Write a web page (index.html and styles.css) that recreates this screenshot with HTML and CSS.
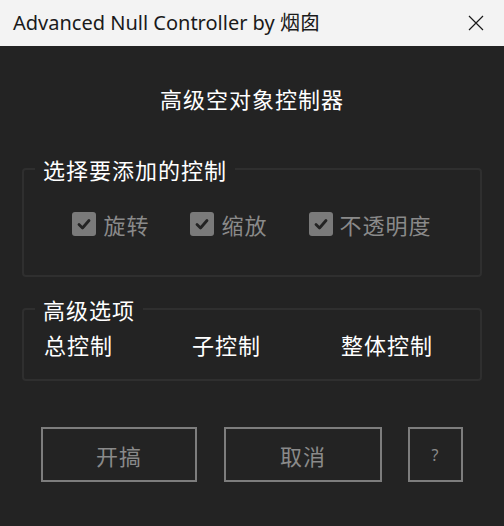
FILE: index.html
```html
<!DOCTYPE html>
<html lang="zh">
<head>
<meta charset="utf-8">
<link rel="stylesheet" href="styles.css">
</head>
<body>
<div class="window">
  <div class="titlebar">
    <span class="title">Advanced Null Controller by 烟囱</span>
    <svg class="close" width="16" height="16" viewBox="0 0 16 16"><path d="M1 1 L15 15 M15 1 L1 15" stroke="#1a1a1a" stroke-width="1.2" fill="none"/></svg>
  </div>
  <div class="content">
    <div class="heading">高级空对象控制器</div>
    <fieldset class="group group1">
      <legend>选择要添加的控制</legend>
      <div class="checks">
        <label class="check"><span class="box"><svg width="16" height="16" viewBox="0 0 16 16"><path d="M3 8.5 L6.5 12 L13 4.5" stroke="#232323" stroke-width="2.8" fill="none" stroke-linecap="round" stroke-linejoin="round"/></svg></span>旋转</label>
        <label class="check"><span class="box"><svg width="16" height="16" viewBox="0 0 16 16"><path d="M3 8.5 L6.5 12 L13 4.5" stroke="#232323" stroke-width="2.8" fill="none" stroke-linecap="round" stroke-linejoin="round"/></svg></span>缩放</label>
        <label class="check"><span class="box"><svg width="16" height="16" viewBox="0 0 16 16"><path d="M3 8.5 L6.5 12 L13 4.5" stroke="#232323" stroke-width="2.8" fill="none" stroke-linecap="round" stroke-linejoin="round"/></svg></span>不透明度</label>
      </div>
    </fieldset>
    <fieldset class="group group2">
      <legend>高级选项</legend>
      <div class="options">
        <span class="opt">总控制</span>
        <span class="opt">子控制</span>
        <span class="opt">整体控制</span>
      </div>
    </fieldset>
    <div class="buttons">
      <button class="btn btn-wide">开搞</button>
      <button class="btn btn-wide2">取消</button>
      <button class="btn btn-help">?</button>
    </div>
  </div>
</div>
</body>
</html>
```
FILE: styles.css
```css
html, body {
  margin: 0;
  padding: 0;
  background: #232323;
}
.window {
  width: 504px;
  height: 526px;
  background: #232323;
  font-family: "Noto Sans CJK SC", "Noto Sans", sans-serif;
}
.titlebar {
  height: 46px;
  background: #f3f3f3;
  display: flex;
  align-items: center;
  justify-content: space-between;
  padding: 0 20px 0 13px;
  box-sizing: border-box;
}
.title {
  font-family: "Noto Sans", "Noto Sans CJK SC", sans-serif;
  font-size: 20px;
  color: #1a1a1a;
  line-height: 26px;
  margin-top: -1px;
}
.close {
  width: 16px;
  height: 16px;
}
.content {
  padding: 0 22px;
}
.heading {
  margin-top: 39px;
  text-align: center;
  color: #ffffff;
  font-size: 22px;
  letter-spacing: 1px;
  line-height: 26px;
  height: 26px;
}
.group {
  margin: 0;
  border: 2px solid #2f2f2f;
  border-radius: 4px;
  padding: 0;
  min-width: 0;
}
.group legend {
  margin-left: 11px;
  padding: 0 8px;
  color: #ffffff;
  font-size: 22px;
  letter-spacing: 1px;
  line-height: 26px;
}
.group1 {
  margin-top: 45px;
}
.checks {
  display: flex;
  justify-content: center;
  gap: 41px;
  padding: 29px 0 38px;
}
.check {
  display: flex;
  align-items: center;
  gap: 7px;
  color: #8a8a8a;
  font-size: 22px;
  letter-spacing: 1px;
  line-height: 26px;
}
.box {
  width: 24px;
  height: 24px;
  background: #7a7a7a;
  border-radius: 3px;
  display: flex;
  align-items: center;
  justify-content: center;
}
.group2 {
  margin-top: 19px;
}
.options {
  display: grid;
  grid-template-columns: 148px 149px auto;
  padding: 9px 0 22px 20px;
}
.opt {
  color: #ffffff;
  font-size: 22px;
  letter-spacing: 1px;
  line-height: 26px;
}
.buttons {
  display: flex;
  margin-top: 46px;
  padding-left: 19px;
  gap: 27px;
}
.btn {
  height: 55px;
  background: transparent;
  border: 2px solid #7d7d7d;
  color: #8a8a8a;
  font-family: "Noto Sans CJK SC", "Noto Sans", sans-serif;
  font-size: 22px;
  letter-spacing: 1px;
  padding: 0;
  margin: 0;
}
.btn-wide { width: 156px; }
.btn-wide2 { width: 158px; margin-right: -1px; }
.btn-help {
  width: 55px;
  font-size: 16px;
  font-family: "Noto Sans", sans-serif;
}
```
